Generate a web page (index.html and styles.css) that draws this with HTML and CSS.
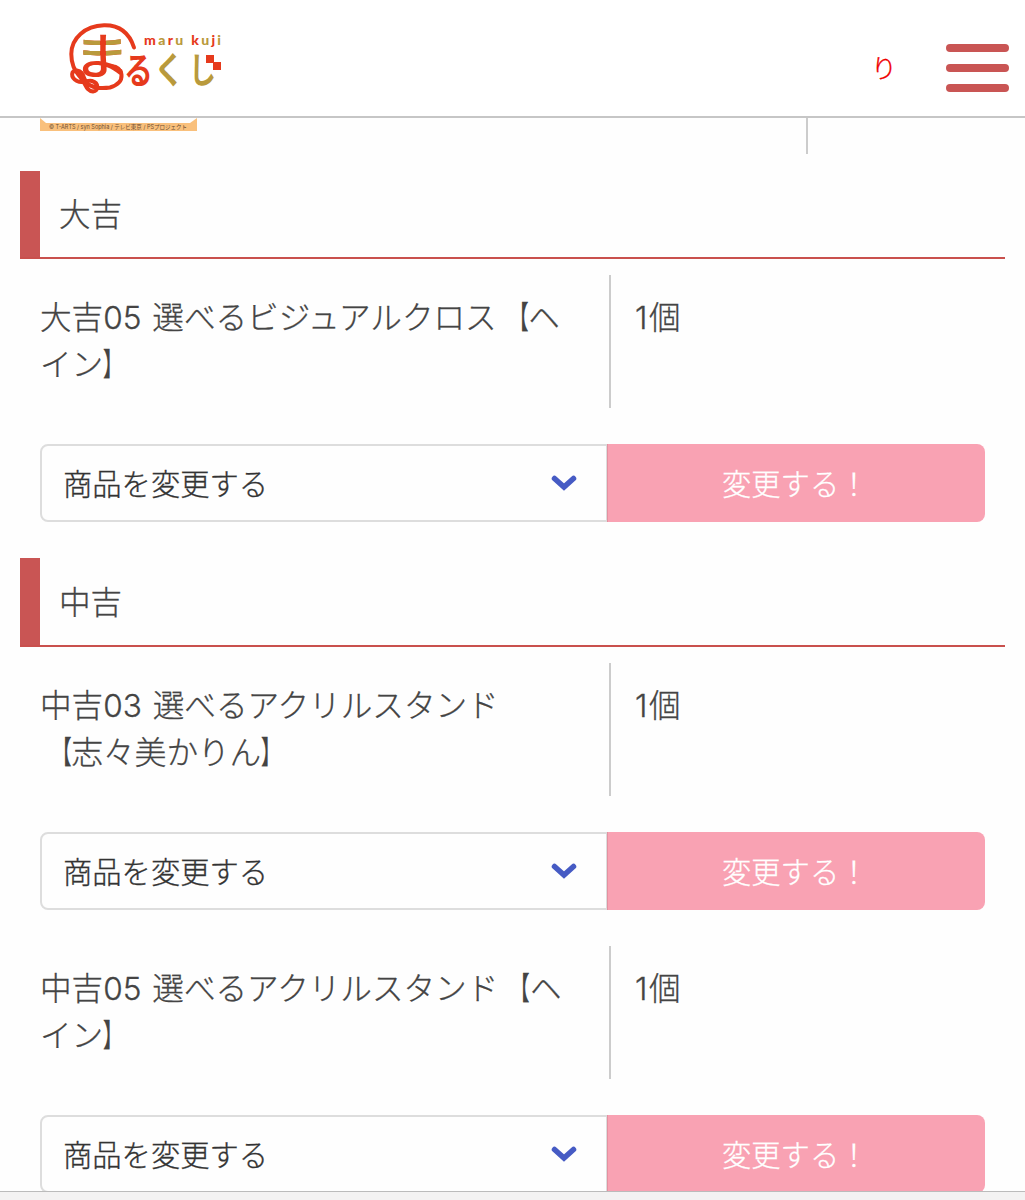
FILE: index.html
```
<!DOCTYPE html>
<html lang="ja">
<head>
  <meta charset="UTF-8" />
  <meta name="viewport" content="width=device-width, initial-scale=1.0"/>
  <title>まるくじ</title>
  <link rel="stylesheet" href="styles.css">
</head>
<body>

  <header class="header">
    <svg class="logo" width="164" height="82" viewBox="64 18 164 82" role="img" aria-label="まるくじ">
      <defs>
        <clipPath id="bars">
          <rect x="76" y="30" width="24" height="26"/>
          <rect x="106" y="30" width="22" height="26"/>
        </clipPath>
      </defs>
      <!-- ring and knot -->
      <g class="logo-cord">
        <path d="M134 47.500C129 32 118 25 104 25.300C85 26 71.300 38 71.300 54C71.300 64 74 70 81 78C86 84 86 91 93 91.500C99 91 99 83 92 81C86 80 83 84 77 81C70 77 71 70 77 70.500C84 71 83 79 87 83C91 87 98 89 110 87.500C118 85 122 81 121.500 75C121 69 116 66.500 111 66"/>
      </g>
      <text class="logo-kana logo-ma red" transform="translate(73 74) scale(1.16 1)" font-size="49">ま</text>
      <g clip-path="url(#bars)">
        <text class="logo-kana logo-ma gold" transform="translate(73 74) scale(1.16 1)" font-size="49">ま</text>
      </g>
      <text class="logo-kana red" transform="translate(124 83.500) scale(.8 1)" font-size="36">る</text>
      <text class="logo-kana gold" transform="translate(154 84) scale(.82 1)" font-size="37">く</text>
      <text class="logo-kana gold" transform="translate(189 83) scale(.77 1)" font-size="35">し</text>
      <rect class="red" x="206" y="55" width="8" height="8"/>
      <rect class="red" x="213" y="62" width="8" height="8"/>
      <text class="logo-roman" x="144" y="45" textLength="77"><tspan class="red">m</tspan><tspan class="gold">a</tspan><tspan class="red">r</tspan><tspan class="gold">u</tspan> <tspan class="red">k</tspan><tspan class="gold">u</tspan><tspan class="red">j</tspan><tspan class="gold">i</tspan></text>
    </svg>
    <div class="header-right">
      <a class="header-link">り</a>
      <div class="menu-btn">
        <span></span>
        <span></span>
        <span></span>
      </div>
    </div>
  </header>

  <main class="container">
    <div class="prev-item">
      <div class="thumb"><svg width="157" height="13"><path class="thumb-corner" d="M0 0H157L150 5H6Z"/><text x="9" y="11" textLength="138" lengthAdjust="spacingAndGlyphs">© T-ARTS / syn Sophia / テレビ東京 / PSプロジェクト</text></svg></div>
    </div>

    <h2>大吉</h2>
    <div class="item">
      <div class="item-name">大吉05 選べるビジュアルクロス<span class="open">【</span>ヘ<br>イン<span class="close">】</span></div>
      <div class="item-count">1個</div>
    </div>
    <div class="change">
      <div class="select">商品を変更する<svg class="arrow" width="28" height="20" viewBox="0 0 28 20"><path d="M4.500 5.500L14 14L23.500 5.500"/></svg></div>
      <div class="btn">変更する！</div>
    </div>

    <h2>中吉</h2>
    <div class="item">
      <div class="item-name">中吉03 選べるアクリルスタンド<br><span class="open">【</span>志々美かりん<span class="close">】</span></div>
      <div class="item-count">1個</div>
    </div>
    <div class="change">
      <div class="select">商品を変更する<svg class="arrow" width="28" height="20" viewBox="0 0 28 20"><path d="M4.500 5.500L14 14L23.500 5.500"/></svg></div>
      <div class="btn">変更する！</div>
    </div>
    <div class="item">
      <div class="item-name">中吉05 選べるアクリルスタンド<span class="open">【</span>ヘ<br>イン<span class="close">】</span></div>
      <div class="item-count">1個</div>
    </div>
    <div class="change">
      <div class="select">商品を変更する<svg class="arrow" width="28" height="20" viewBox="0 0 28 20"><path d="M4.500 5.500L14 14L23.500 5.500"/></svg></div>
      <div class="btn">変更する！</div>
    </div>
  </main>

  <div class="bottom-bar"></div>

</body>
</html>
```
FILE: styles.css
```
* {
  box-sizing: border-box;
}
body {
  display: flex;
  flex-direction: column;
  height: 1200px;
  margin: 0;
  overflow: hidden;
  background: #fefefe;
  color: #444;
  font-family: Inter, "Noto Sans CJK JP", sans-serif;
  font-size: 31.6px;
  font-weight: 300;
  line-height: 47px;
  -webkit-text-stroke: 0.3px;
}
.header {
  display: flex;
  flex: none;
  justify-content: space-between;
  height: 118px;
  padding: 18px 16px 0 64px;
  border-bottom: 2px solid #c6c6c6;
  background: #fff;
}
.logo {
  display: block;
  -webkit-text-stroke: 0;
}
.logo-cord {
  fill: none;
  stroke: #e63a1c;
  stroke-width: 4;
  stroke-linecap: round;
}
.logo-kana {
  font-family: "Noto Sans CJK JP", sans-serif;
  font-weight: 700;
}
.logo-ma {
  font-weight: 500;
}
.logo-roman {
  font-family: Lato, sans-serif;
  font-size: 14px;
  font-weight: 900;
}
.red {
  fill: #e63a1c;
}
.gold {
  fill: #b99a3c;
}
.header-right {
  display: flex;
  gap: 49px;
}
.header-link {
  margin-top: 27px;
  color: #f00000;
  font-size: 26px;
}
.menu-btn {
  display: flex;
  flex-direction: column;
  gap: 12px;
  width: 63px;
  padding-top: 26px;
}
.menu-btn span {
  height: 8px;
  border-radius: 4px;
  background: #c95554;
}
.container {
  flex: 1;
  min-height: 0;
  padding: 0 20px;
  overflow: hidden;
}
.prev-item {
  width: 788px;
  height: 36px;
  margin-bottom: 17px;
  padding-left: 20px;
  border-right: 2px solid #ccc;
}
.thumb {
  width: 157px;
  height: 13px;
  background: #f9c07c;
}
.thumb svg {
  display: block;
  -webkit-text-stroke: 0;
}
.thumb text {
  fill: #6b4d33;
  font-size: 6px;
  font-weight: 400;
}
.thumb-corner {
  fill: #fefefe;
}
h2 {
  height: 88px;
  margin: 0 0 16px;
  padding: 20px 20px 20px 39px;
  border-bottom: 2px solid #c9504d;
  background: linear-gradient(#c95554, #c95554) left / 20px 100% no-repeat border-box;
  font-size: inherit;
  font-weight: inherit;
}
.item {
  display: flex;
  height: 133px;
  margin: 0 20px 36px;
}
.item-name {
  width: 571px;
  padding: 19px 0;
  border-right: 2px solid #ccc;
  white-space: nowrap;
  word-spacing: 2px;
}
/* narrow brackets, drawn towards the text they enclose */
.open,
.close {
  display: inline-block;
  width: 31.6px;
  line-height: 1;
  transform: scaleX(0.62);
}
.open {
  transform-origin: right;
}
.close {
  width: 16px;
  transform-origin: left;
}
.item-count {
  padding: 19px 24px;
  letter-spacing: 1.5px;
}
.change {
  display: flex;
  height: 78px;
  margin: 0 20px 36px;
}
.change + h2 {
  height: 89px;
  padding-top: 21px;
}
.select {
  display: flex;
  align-items: center;
  justify-content: space-between;
  width: 568px;
  padding: 2px 28px 0 21px;
  border: 2px solid #ddd;
  border-right-width: 1px;
  border-radius: 8px 0 0 8px;
  color: #333;
  font-size: 29.3px;
}
.arrow {
  margin-top: -2px;
}
.arrow path {
  fill: none;
  stroke: #465bc4;
  stroke-width: 5.5;
  stroke-linecap: round;
}
.btn {
  flex: none;
  width: 378px;
  padding-left: 114px;
  border-left: 1px solid #e391a0;
  border-radius: 0 8px 8px 0;
  background: #f9a2b3;
  color: #fff;
  font-size: 29.3px;
  line-height: 81px;
}
.bottom-bar {
  flex: none;
  height: 9px;
  border-top: 1px solid #bbb;
  background: #f3f2f2;
}
```
